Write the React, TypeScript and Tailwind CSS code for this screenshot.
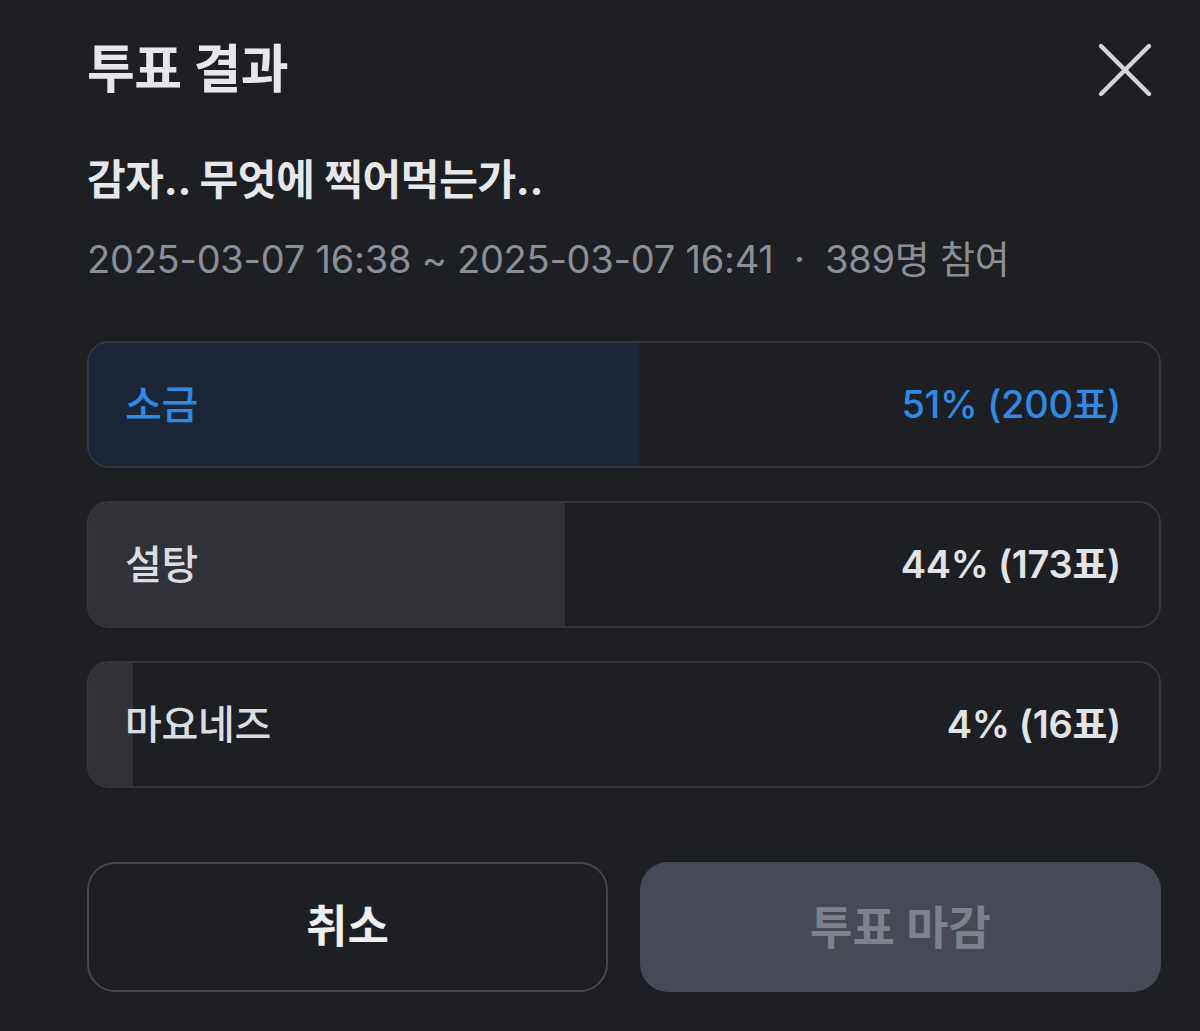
import { X } from "lucide-react";

const options = [
  { label: "소금", votes: 200, active: true },
  { label: "설탕", votes: 173, active: false },
  { label: "마요네즈", votes: 16, active: false },
];

const total = 389;

export default function App() {
  return (
    <div
      className="w-[1200px] h-[1031px] bg-[#1e1f23] pl-[87px] pr-[39px] pt-[38px] overflow-hidden"
      style={{ fontFamily: 'Inter, "Noto Sans CJK KR", sans-serif' }}
    >
      <div className="flex items-center justify-between h-[64px]">
        <h2 className="text-[52px] font-bold text-[#e6e7ea] tracking-[-0.5px] leading-[64px]">투표 결과</h2>
        <button className="text-[#d4d5d8] -mr-[12px]">
          <X className="w-[96px] h-[96px]" strokeWidth={1.1} />
        </button>
      </div>

      <p className="mt-[52px] text-[42px] font-bold text-[#e6e7ea] leading-[52px] tracking-[-0.3px]">
        감자.. 무엇에 찍어먹는가..
      </p>
      <p className="mt-[29px] text-[38px] text-[#8c8f97] leading-[48px] tracking-[-0.25px]">
        2025-03-07 16:38 ~ 2025-03-07 16:41 <span className="mx-[10px]">·</span> 389명 참여
      </p>

      <div className="mt-[58px] flex flex-col gap-[33px]">
        {options.map((o) => {
          const pct = Math.round((o.votes / total) * 100);
          return (
            <div
              key={o.label}
              className="relative h-[127px] rounded-[22px] border-2 border-[#34363c] overflow-hidden"
            >
              <div
                className={
                  "absolute inset-y-0 left-0 " +
                  (o.active ? "bg-[#1b2738]" : "bg-[#313237]")
                }
                style={{ width: `${(o.votes / total) * 100}%` }}
              />
              <div className="relative flex h-full items-center justify-between pl-[36px] pr-[38px] tracking-[-0.3px]">
                <span
                  className={
                    "text-[40px] font-medium " + (o.active ? "text-[#2f8ae5]" : "text-[#dcdde0]")
                  }
                >
                  {o.label}
                </span>
                <span
                  className={
                    "text-[38px] " +
                    (o.active ? "text-[#2f8ae5] font-medium" : "text-[#e2e3e6] font-semibold")
                  }
                >
                  {pct}% ({o.votes}표)
                </span>
              </div>
            </div>
          );
        })}
      </div>

      <div className="mt-[74px] grid grid-cols-2 gap-[32px]">
        <button className="h-[130px] rounded-[28px] border-2 border-[#45474d] text-[45px] font-bold text-[#eeeff1]">
          취소
        </button>
        <button className="h-[130px] rounded-[28px] bg-[#474a54] text-[46px] font-semibold text-[#7e828c]">
          투표 마감
        </button>
      </div>
    </div>
  );
}
